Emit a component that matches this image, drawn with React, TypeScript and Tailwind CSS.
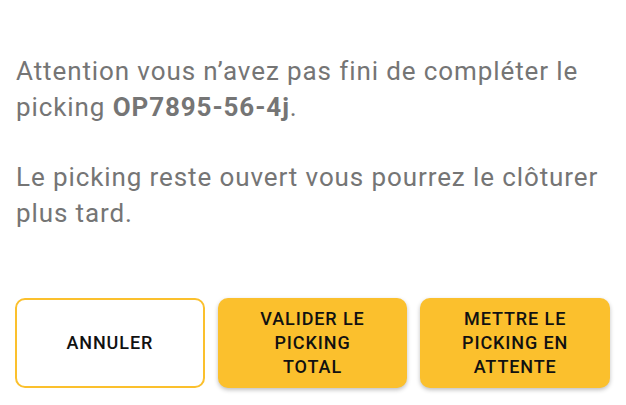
export default function App() {
  return (
    <div className="w-[626px] h-[405px] bg-white px-4 pt-[53px] font-['Roboto',sans-serif]">
      <div className="text-[26px] leading-[36px] tracking-[0.9px] text-[#757575]">
        <p>
          Attention vous n’avez pas fini de compléter le picking{" "}
          <span className="font-bold">OP7895-56-4j</span>.
        </p>
        <p className="mt-[34px]">
          Le picking reste ouvert vous pourrez le clôturer plus tard.
        </p>
      </div>
      <div className="mt-[67px] flex gap-[13px] -ml-px">
        <button className="w-[190px] h-[90px] rounded-[10px] border-2 border-[#fbc02d] bg-white px-7 text-[18px] leading-[24px] font-medium tracking-[0.9px] text-[#111]">
          ANNULER
        </button>
        <button className="w-[190px] h-[90px] rounded-[10px] bg-[#fbc02d] shadow-[0_2px_4px_rgba(0,0,0,0.25)] px-7 text-[18px] leading-[24px] font-medium tracking-[0.9px] text-[#111]">
          VALIDER LE PICKING TOTAL
        </button>
        <button className="w-[190px] h-[90px] rounded-[10px] bg-[#fbc02d] shadow-[0_2px_4px_rgba(0,0,0,0.25)] px-7 text-[18px] leading-[24px] font-medium tracking-[0.9px] text-[#111]">
          METTRE LE PICKING EN ATTENTE
        </button>
      </div>
    </div>
  );
}
